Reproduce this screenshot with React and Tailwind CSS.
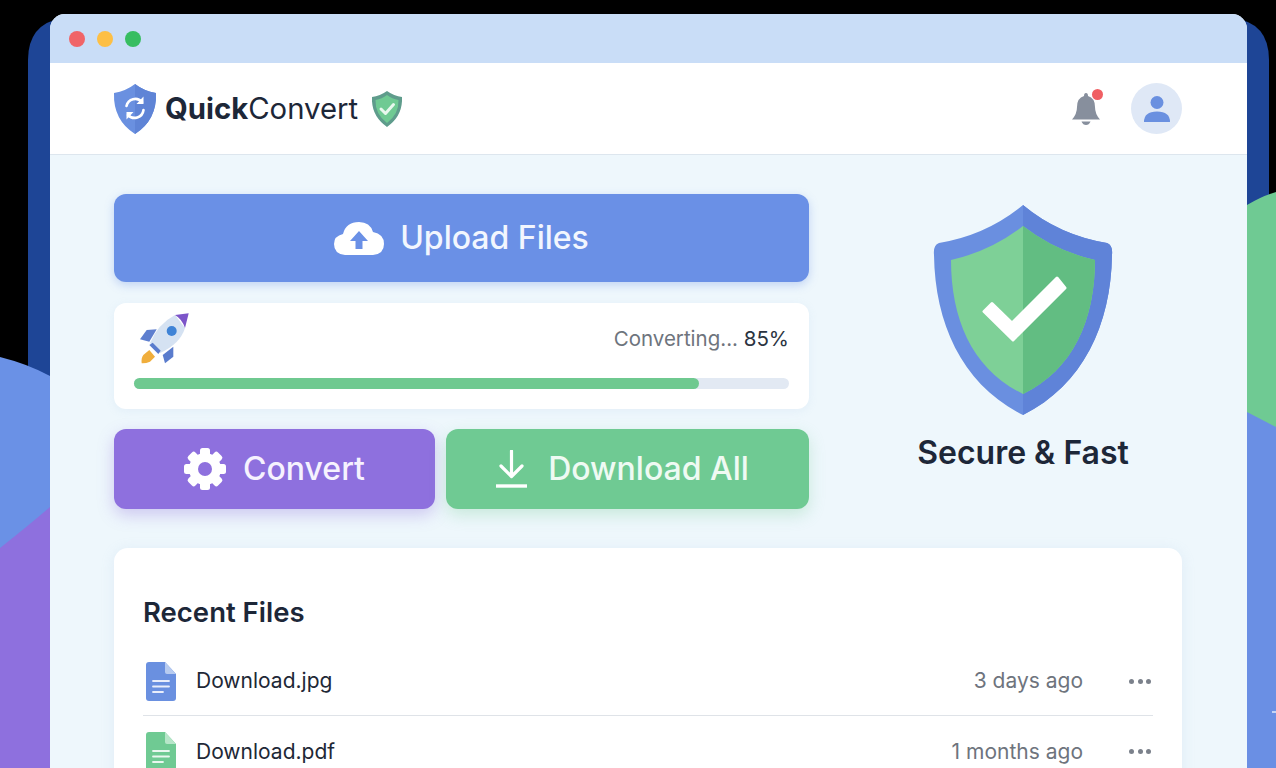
const BackgroundShapes = () => (
  <svg className="absolute inset-0" width="1276" height="768" viewBox="0 0 1276 768">
    <path d="M28 768V60Q28 24 62 18H1232Q1269 22 1269 60V768Z" fill="#1e4596" />
    <path d="M0 357Q28 364 50 376V768H0Z" fill="#6a91e6" />
    <path d="M0 548Q28 526 50 507V768H0Z" fill="#8e70de" />
    <path d="M1247 205Q1262 196 1276 192V768H1247Z" fill="#6fca93" />
    <path d="M1247 412L1276 427V768H1247Z" fill="#6a8fe4" />
    <path d="M1272 712H1276" stroke="#c3d4f5" strokeWidth="2" />
  </svg>
);

const LogoShield = () => (
  <svg width="44" height="50" viewBox="0 0 44 50">
    <path d="M22 0Q31 7 43 9Q44 36 22 50Q0 36 1 9Q13 7 22 0Z" fill="#6a90e0" />
    <path d="M22 0Q31 7 43 9Q44 36 22 50Z" fill="#5f84d6" />
    <path d="M13.5 22A9 9 0 0 1 29 18" fill="none" stroke="#fff" strokeWidth="2.6" strokeLinecap="round" />
    <path d="M30.5 12.5V20H23.5Z" fill="#fff" />
    <path d="M30.5 26A9 9 0 0 1 15 31" fill="none" stroke="#fff" strokeWidth="2.6" strokeLinecap="round" />
    <path d="M13.5 35.5V28H20.5Z" fill="#fff" />
  </svg>
);

const SmallShield = () => (
  <svg width="30" height="36" viewBox="0 0 30 36">
    <path d="M15 0Q22 5 30 6Q31 25 15 36Q-1 25 0 6Q8 5 15 0Z" fill="#5f9c8c" />
    <path d="M15 4Q20 8 26.500 9Q27 23 15 32Q3 23 3.500 9Q10 8 15 4Z" fill="#6fca93" />
    <path d="M9 18L13.500 22.500L21.500 13.500" fill="none" stroke="#e8f8ee" strokeWidth="3" strokeLinecap="round" strokeLinejoin="round" />
  </svg>
);

const BigShield = () => (
  <svg width="180" height="210" viewBox="0 0 180 210">
    <path d="M90 0Q126 30 174 38Q180 40 179 50C178 120 150 180 90 210C30 180 2 120 1 50Q0 40 6 38Q54 30 90 0Z" fill="#6a8fe0" />
    <path d="M90 0Q126 30 174 38Q180 40 179 50C178 120 150 180 90 210Z" fill="#5f83d8" />
    <path d="M90 21Q122 46 162 55C162 115 140 165 90 189C40 165 18 115 18 55Q58 46 90 21Z" fill="#7ed097" />
    <path d="M90 21Q122 46 162 55C162 115 140 165 90 189Z" fill="#62bd82" />
    <path d="M51 106.500L59 98.500L79 118L124 73L132 83L80 135Z" fill="#fff" stroke="#fff" strokeWidth="3" strokeLinejoin="round" />
  </svg>
);

const Rocket = () => (
  <svg width="52" height="54" viewBox="0 0 52 54">
    <path d="M3.700 51.300Q3 46 5.300 43L11.300 38L17 44.700L12 49.700Q8 51.500 3.700 51.300Z" fill="#f0ae3c" />
    <path d="M2 27.300L8.700 18L18.700 17.300L11.300 29.700Z" fill="#5e7fcf" />
    <path d="M24.700 43L27 51.300L35.300 44.700V34.700Z" fill="#5a7ccd" />
    <path d="M37 3Q20 12 12 31L22 41Q42 32 47 16Z" fill="#d5e2f2" />
    <path d="M11.300 33L14.700 30.700L22.700 38.700L20.300 42Z" fill="#5a7ccd" />
    <path d="M37 3L50.700 1.300L47 16Q44 7 37 3Z" fill="#7c55c9" />
    <circle cx="33.700" cy="19" r="5" fill="#3f83d6" />
  </svg>
);

const CloudUpload = () => (
  <svg width="50" height="34" viewBox="0 0 50 34">
    <path d="M11 34Q0 33 0 23Q0 15 9 13Q12 1 25 1Q36 1 39 11Q50 13 50 23Q50 33 39 34Z" fill="#fff" />
    <path d="M25 10L34 20H28.500V28H21.500V20H16Z" fill="#6a90e6" />
  </svg>
);

const Gear = () => (
  <svg width="42" height="42" viewBox="0 0 42 42">
    <g fill="#fff">
      <rect x="16" y="0" width="10" height="42" rx="2.500" />
      <rect x="16" y="0" width="10" height="42" rx="2.500" transform="rotate(45 21 21)" />
      <rect x="16" y="0" width="10" height="42" rx="2.500" transform="rotate(90 21 21)" />
      <rect x="16" y="0" width="10" height="42" rx="2.500" transform="rotate(135 21 21)" />
      <circle cx="21" cy="21" r="16" />
    </g>
    <circle cx="21" cy="21" r="7" fill="#8e70de" />
  </svg>
);

const DownloadIcon = () => (
  <svg width="33" height="38" viewBox="0 0 33 38">
    <path d="M16.500 1V26M6 16L16.500 26.500L27 16" fill="none" stroke="#fff" strokeWidth="3.200" strokeLinecap="round" strokeLinejoin="round" />
    <path d="M1 36H32" stroke="#fff" strokeWidth="3.400" />
  </svg>
);

const BellIcon = () => (
  <svg width="28" height="32" viewBox="0 0 28 32">
    <path d="M14 0Q16 0 16 3Q23 5 23 14Q23 21 28 26.500H0Q5 21 5 14Q5 5 12 3Q12 0 14 0Z" fill="#878f9d" />
    <path d="M9.500 28.500H18.500Q17 32 14 32Q11 32 9.500 28.500Z" fill="#878f9d" />
  </svg>
);

const UserIcon = () => (
  <svg width="26" height="26" viewBox="0 0 26 26">
    <circle cx="13" cy="6.500" r="6.500" fill="#6a90e0" />
    <path d="M0 26Q0 15.500 13 15.500Q26 15.500 26 26Z" fill="#6a90e0" />
  </svg>
);

const FileIcon = ({ color, fold }) => (
  <svg width="30" height="39" viewBox="0 0 30 39">
    <path d="M3 0H19L30 12V36Q30 39 27 39H3Q0 39 0 36V3Q0 0 3 0Z" fill={color} />
    <path d="M19 0L30 12H21Q19 12 19 10Z" fill={fold} />
    <path d="M7 19H23M7 24.500H23M7 30H17" stroke="#fff" strokeOpacity="0.85" strokeWidth="1.800" strokeLinecap="round" />
  </svg>
);

const MoreDots = () => (
  <div className="flex w-[22px] justify-between">
    <span className="size-[5px] rounded-full bg-[#7b818b]"></span>
    <span className="size-[5px] rounded-full bg-[#7b818b]"></span>
    <span className="size-[5px] rounded-full bg-[#7b818b]"></span>
  </div>
);

const FileRow = ({ name, date, color, fold, border }) => (
  <div className={`flex h-[70px] shrink-0 items-center pt-[1px] ${border ? "border-b border-[#dfe3e8]" : ""}`}>
    <div className="ml-[3px] flex w-[50px] shrink-0 items-center">
      <FileIcon color={color} fold={fold} />
    </div>
    <span className="text-[21px] text-[#1e2836]">{name}</span>
    <span className="ml-auto text-[21px] text-[#6e747d]">{date}</span>
    <div className="ml-[46px] mr-[2px]">
      <MoreDots />
    </div>
  </div>
);

export default function App() {
  return (
    <div className="relative h-[768px] w-[1276px] overflow-hidden bg-black font-['Inter',sans-serif]">
      <BackgroundShapes />

      <div className="relative ml-[50px] mt-[14px] flex h-[754px] w-[1197px] flex-col overflow-hidden rounded-t-[15px] bg-[#eef7fc]">
        <div className="flex h-[49px] shrink-0 items-center gap-[12px] bg-[#c9ddf7] pl-[19px]">
          <span className="size-[16px] rounded-full bg-[#f06468]"></span>
          <span className="size-[16px] rounded-full bg-[#fdbf45]"></span>
          <span className="size-[16px] rounded-full bg-[#37bd61]"></span>
        </div>

        <header className="flex h-[92px] shrink-0 items-center border-b border-[#dde6ee] bg-white pl-[63px] pr-[65px]">
          <LogoShield />
          <div className="ml-[8px] text-[29.300px] leading-none text-[#1d2738]">
            <span className="font-bold">Quick</span>
            <span>Convert</span>
          </div>
          <div className="ml-[14px]">
            <SmallShield />
          </div>
          <div className="relative ml-auto mr-[31px]">
            <BellIcon />
            <span className="absolute -right-[3px] -top-[4px] size-[11px] rounded-full bg-[#f05f63]"></span>
          </div>
          <div className="flex size-[51px] items-center justify-center rounded-full bg-[#dfe8f6]">
            <UserIcon />
          </div>
        </header>

        <main className="flex min-h-0 flex-1 flex-col pl-[64px] pr-[65px] pt-[39px]">
          <div className="flex shrink-0">
            <div className="flex w-[695px] flex-col">
              <button className="flex h-[88px] items-center justify-center gap-[16px] rounded-[12px] bg-[#6a90e6] text-[32px] font-medium text-[#f2f6fe] shadow-[0_3px_10px_rgba(106,144,230,0.35)]">
                <CloudUpload />
                Upload Files
              </button>

              <div className="mt-[21px] h-[106px] rounded-[12px] bg-white px-[20px] pt-[9px] shadow-[0_2px_10px_rgba(150,180,220,0.12)]">
                <div className="flex items-center justify-between pl-[4px]">
                  <Rocket />
                  <span className="pt-[1px] text-[20.500px] text-[#6e747d]">
                    Converting... <span className="text-[#2b3441]">85%</span>
                  </span>
                </div>
                <div className="mt-[12px] h-[11px] rounded-full bg-[#e2e9f3]">
                  <div className="h-full w-[86.300%] rounded-full bg-[#6fc990]"></div>
                </div>
              </div>

              <div className="mt-[20px] flex gap-[11px]">
                <button className="flex h-[80px] w-[321px] items-center justify-center gap-[17px] rounded-[12px] bg-[#8e70de] text-[32px] font-medium text-[#f6f2fe] shadow-[0_6px_16px_rgba(142,112,222,0.35)]">
                  <Gear />
                  Convert
                </button>
                <button className="flex h-[80px] w-[363px] items-center justify-center gap-[20px] rounded-[12px] bg-[#6fca93] pr-[11px] text-[32px] font-medium text-[#effaf3] shadow-[0_6px_16px_rgba(111,202,147,0.3)]">
                  <DownloadIcon />
                  Download All
                </button>
              </div>
            </div>

            <div className="flex flex-1 flex-col items-center pl-[55px] pt-[11px]">
              <BigShield />
              <p className="mt-[18px] text-[32px] font-semibold leading-[40px] text-[#1d2738]">Secure &amp; Fast</p>
            </div>
          </div>

          <section className="mt-[39px] flex-1 rounded-t-[14px] bg-white px-[29px] pt-[47px] shadow-[0_2px_14px_rgba(150,180,220,0.16)]">
            <h2 className="text-[27.500px] font-semibold leading-[34px] text-[#1d2738]">Recent Files</h2>
            <div className="mt-[17px] flex flex-col">
              <FileRow name="Download.jpg" date="3 days ago" color="#6a90e0" fold="#b7cbf0" border />
              <FileRow name="Download.pdf" date="1 months ago" color="#6fca93" fold="#b7e6c9" />
            </div>
          </section>
        </main>
      </div>
    </div>
  );
}
